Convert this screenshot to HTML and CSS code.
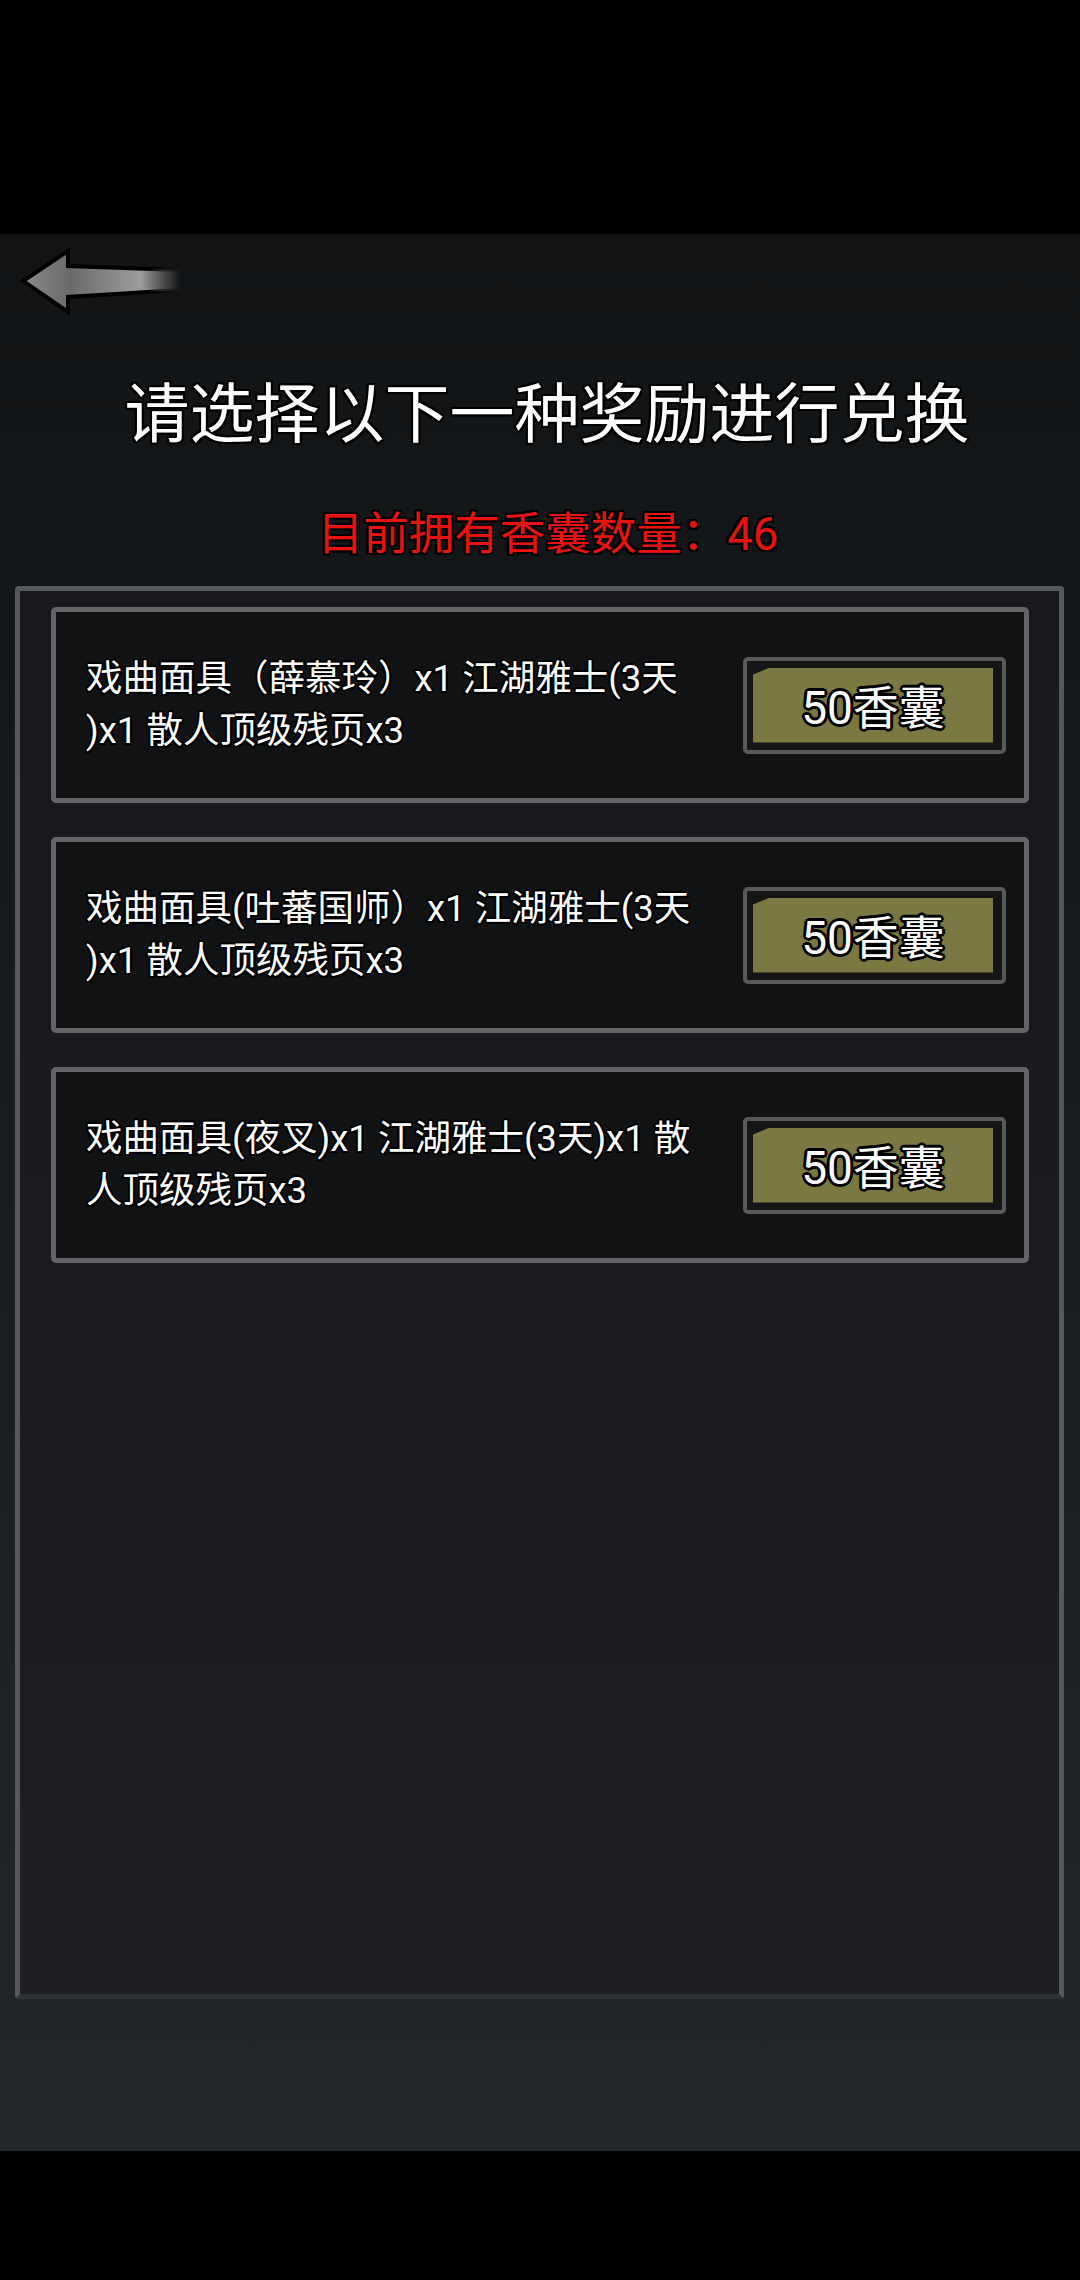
FILE: index.html
```html
<!DOCTYPE html>
<html lang="zh-CN">
<head>
<meta charset="utf-8">
<title>兑换</title>
<link rel="stylesheet" href="styles.css">
</head>
<body>
<div class="topbar"></div>
<main class="screen">
  <div class="back-row">
    <svg class="back" width="170" height="72" viewBox="0 0 170 72">
      <defs>
        <linearGradient id="shaft" x1="0" y1="0" x2="1" y2="0">
          <stop offset="0" stop-color="#8a8a8a"/>
          <stop offset="0.3" stop-color="#6a6a6a"/>
          <stop offset="0.75" stop-color="#9c9c9c"/>
          <stop offset="1" stop-color="#9c9c9c" stop-opacity="0"/>
        </linearGradient>
        <linearGradient id="edge" x1="0" y1="0" x2="1" y2="0">
          <stop offset="0" stop-color="#000"/>
          <stop offset="0.8" stop-color="#000"/>
          <stop offset="1" stop-color="#000" stop-opacity="0"/>
        </linearGradient>
      </defs>
      <polygon points="3,35 48,5 48,20 160,24 160,44 48,51 48,66" fill="url(#shaft)" stroke="url(#edge)" stroke-width="4" stroke-linejoin="miter"/>
    </svg>
  </div>
  <h1 class="title">请选择以下一种奖励进行兑换</h1>
  <p class="count">目前拥有香囊数量：46</p>
  <section class="panel">
    <div class="card">
      <p class="desc">戏曲面具（薛慕玲）x1 江湖雅士(3天<br>)x1 散人顶级残页x3</p>
      <button class="buy"><span class="buy-fill">50香囊</span></button>
    </div>
    <div class="card">
      <p class="desc">戏曲面具(吐蕃国师）x1 江湖雅士(3天<br>)x1 散人顶级残页x3</p>
      <button class="buy"><span class="buy-fill">50香囊</span></button>
    </div>
    <div class="card">
      <p class="desc">戏曲面具(夜叉)x1 江湖雅士(3天)x1 散<br>人顶级残页x3</p>
      <button class="buy"><span class="buy-fill">50香囊</span></button>
    </div>
  </section>
</main>
<div class="bottombar"></div>
</body>
</html>
```

FILE: styles.css
```css
* { box-sizing: border-box; }
html, body {
  margin: 0;
  padding: 0;
  background: #000;
  width: 1080px;
  height: 2280px;
  overflow: hidden;
  font-family: Roboto, "Noto Sans CJK SC", "Noto Sans", sans-serif;
}
.topbar { height: 234px; background: #000; }
.bottombar { height: 129px; background: #000; }
.screen {
  height: 1917px;
  background: linear-gradient(180deg, #111315 0%, #16191b 30%, #1d2023 65%, #24282b 100%);
  display: flex;
  flex-direction: column;
  align-items: stretch;
}
.back-row {
  height: 141px;
  padding: 12px 0 0 20px;
}
.back { display: block; }
.title {
  margin: 0;
  padding-left: 14px;
  height: 80px;
  line-height: 80px;
  font-size: 65px;
  font-weight: 400;
  color: #fff;
  text-align: center;
  text-shadow: 0 0 3px #000, 2px 0 0 #000, -2px 0 0 #000, 0 2px 0 #000, 0 -2px 0 #000,
    2px 2px 0 #000, -2px 2px 0 #000, 2px -2px 0 #000, -2px -2px 0 #000;
}
.count {
  margin: 50px 0 0;
  padding-left: 16px;
  height: 60px;
  line-height: 60px;
  font-size: 45.5px;
  color: #e8120f;
  text-align: center;
  text-shadow: 0 0 3px #000, 2px 0 0 #000, -2px 0 0 #000, 0 2px 0 #000, 0 -2px 0 #000,
    2px 2px 0 #000, -2px 2px 0 #000, 2px -2px 0 #000, -2px -2px 0 #000;
}
.panel {
  margin: 21px 16px 0 15px;
  height: 1413px;
  border: 5px solid #56585b;
  border-bottom-color: #303336;
  border-radius: 4px;
  background: linear-gradient(180deg, #17191c 0%, #1a1c1f 60%, #1d1f22 100%);
  padding: 16px 30px 0 31px;
  display: flex;
  flex-direction: column;
  gap: 34px;
}
.card {
  height: 196px;
  border: 5px solid #636466;
  border-radius: 5px;
  background: #111214;
  display: flex;
  align-items: center;
  justify-content: space-between;
  padding: 0 18px 0 30px;
}
.desc {
  margin: 0;
  font-size: 36.5px;
  line-height: 52px;
  color: #fff;
  white-space: pre;
  text-shadow: 0 0 2px #000, 2px 0 0 #000, -2px 0 0 #000, 0 2px 0 #000, 0 -2px 0 #000,
    1.5px 1.5px 0 #000, -1.5px 1.5px 0 #000, 1.5px -1.5px 0 #000, -1.5px -1.5px 0 #000;
}
.buy {
  width: 263px;
  height: 97px;
  padding: 7px 9px 7px 6px;
  border: 4px solid #58595b;
  border-radius: 5px;
  background: #151516;
  font-family: inherit;
  cursor: pointer;
  flex-shrink: 0;
  display: flex;
}
.buy-fill {
  flex: 1;
  display: flex;
  align-items: center;
  justify-content: center;
  padding-top: 5px;
  background: #7b7941;
  clip-path: polygon(0 7px, 17px 0, 100% 0, 100% 100%, 0 100%);
  color: #fff;
  font-size: 46px;
  line-height: 1;
  text-shadow: 0 0 3px #000, 3px 0 0 #000, -3px 0 0 #000, 0 3px 0 #000, 0 -3px 0 #000,
    2px 2px 0 #000, -2px 2px 0 #000, 2px -2px 0 #000, -2px -2px 0 #000;
}
```
